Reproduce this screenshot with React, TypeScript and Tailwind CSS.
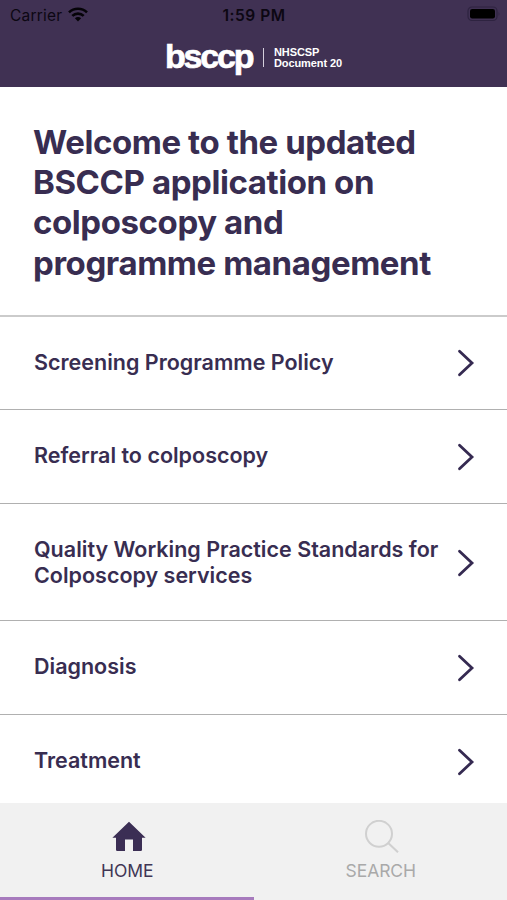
import { ReactNode } from 'react';

interface Topic {
    title: string;
    rowClass: string;
}

const topics: Topic[] = [
    { title: 'Screening Programme Policy', rowClass: 'h-[93px]' },
    { title: 'Referral to colposcopy', rowClass: 'h-[94px]' },
    { title: 'Quality Working Practice Standards for Colposcopy services', rowClass: 'h-[117px] pt-[2px]' },
    { title: 'Diagnosis', rowClass: 'h-[94px]' },
    { title: 'Treatment', rowClass: 'h-[94px]' },
];

function WifiIcon() {
    return (
        <svg width="20" height="15" viewBox="0 0 20 15" fill="none" stroke="#050308" strokeWidth="2.6">
            <path d="M1 5.4C6 .6 14 .6 19 5.4" />
            <path d="M4.3 8.9C7.5 5.8 12.5 5.8 15.7 8.9" />
            <path d="M10 14.6 6.9 11.3C8.6 9.7 11.4 9.7 13.1 11.3Z" fill="#050308" stroke="none" />
        </svg>
    );
}

function BatteryIcon() {
    return (
        <svg width="34" height="16" viewBox="0 0 34 16" fill="none">
            <rect x="1" y="1" width="29" height="13.5" rx="4" stroke="#2e2340" strokeWidth="1.2" />
            <rect x="3" y="3" width="25" height="9.5" rx="2.2" fill="#000" />
            <path d="M31.6 5.6Q33.2 7.8 31.6 10Z" fill="#2e2340" />
        </svg>
    );
}

function Header() {
    return (
        <header className="h-[87px] shrink-0 bg-[#403153]">
            <div className="flex h-[30px] items-center pl-[10px] pr-[6px] text-[#0c0712]">
                <div className="flex flex-1 items-center gap-[6px]">
                    <span className="pt-px text-[15.5px] tracking-[0.2px]">Carrier</span>
                    <span className="pb-[2px]">
                        <WifiIcon />
                    </span>
                </div>
                <span className="pr-[3px] pt-px text-[15.5px] font-semibold tracking-[0.55px]">1:59 PM</span>
                <div className="flex flex-1 justify-end pb-[2px]">
                    <BatteryIcon />
                </div>
            </div>
            <div className="flex h-[57px] pl-[165px] font-['Liberation_Sans',Arial,sans-serif] font-bold text-white">
                <span className="mt-[6px] w-[97px] text-[34px] leading-[40px] tracking-[-2.2px] [-webkit-text-stroke:0.7px_white]">
                    bsccp
                </span>
                <span className="mt-[18px] ml-px h-[19px] w-px bg-[#d5cfdc]" />
                <p className="ml-[10px] mt-[17px] text-[11px] leading-[11px] tracking-[-0.1px]">
                    NHSCSP
                    <br />
                    Document 20
                </p>
            </div>
        </header>
    );
}

function TopicRow({ title, rowClass }: Topic) {
    return (
        <li className={`flex items-center border-b border-[#b0b0b0] pl-[34px] pr-[32px] ${rowClass}`}>
            <span className="w-[420px] pb-px text-[21.5px] font-[640] leading-[25.5px]">{title}</span>
            <svg
                className="ml-auto shrink-0"
                width="18"
                height="28"
                viewBox="0 0 18 28"
                fill="none"
                stroke="#352a51"
                strokeWidth="2.8"
                strokeLinecap="round"
            >
                <path d="M2.5 2.2 15 14 2.5 25.8" />
            </svg>
        </li>
    );
}

function Tab({ label, className, children }: { label: string; className: string; children: ReactNode }) {
    return (
        <button className={`flex flex-1 flex-col items-center border-b-[3px] pl-px pt-[17px] ${className}`}>
            {children}
            <span className="mt-[5px] text-[17.5px] leading-[26px] tracking-[-0.1px]">{label}</span>
        </button>
    );
}

export default function App() {
    return (
        <div className="flex h-[900px] w-[507px] flex-col overflow-hidden bg-white font-['Inter',sans-serif] text-[#382d51]">
            <Header />
            <main className="min-h-0 flex-1 overflow-hidden">
                <h1 className="h-[230px] w-full border-b-2 border-[#cbcbcb] pl-[33px] pr-[60px] pt-[35px] text-[33px] font-[650] leading-[40.2px] tracking-[-0.42px]">
                    Welcome to the updated BSCCP application on colposcopy and programme management
                </h1>
                <ul>
                    {topics.map((topic) => (
                        <TopicRow key={topic.title} {...topic} />
                    ))}
                </ul>
            </main>
            <nav className="flex h-[97px] shrink-0 bg-[#f1f1f1]">
                <Tab label="HOME" className="border-[#a77bbd] text-[#403655]">
                    <svg className="ml-[3px]" width="34" height="33" viewBox="0 0 34 33" fill="#3b2e54">
                        <path d="M17 1.8 33.6 17.8H30V29.7Q30 31 28.7 31H21V19.6H13V31H5.3Q4 31 4 29.7V17.8H.4Z" />
                    </svg>
                </Tab>
                <Tab label="SEARCH" className="border-transparent text-[#a9a9a9]">
                    <svg className="ml-[3px]" width="34" height="33" viewBox="0 0 34 33" fill="none" stroke="#d0d0d0" strokeWidth="2">
                        <circle cx="14" cy="13.8" r="13" />
                        <path d="M23.2 23 33 32.3" />
                    </svg>
                </Tab>
            </nav>
        </div>
    );
}
